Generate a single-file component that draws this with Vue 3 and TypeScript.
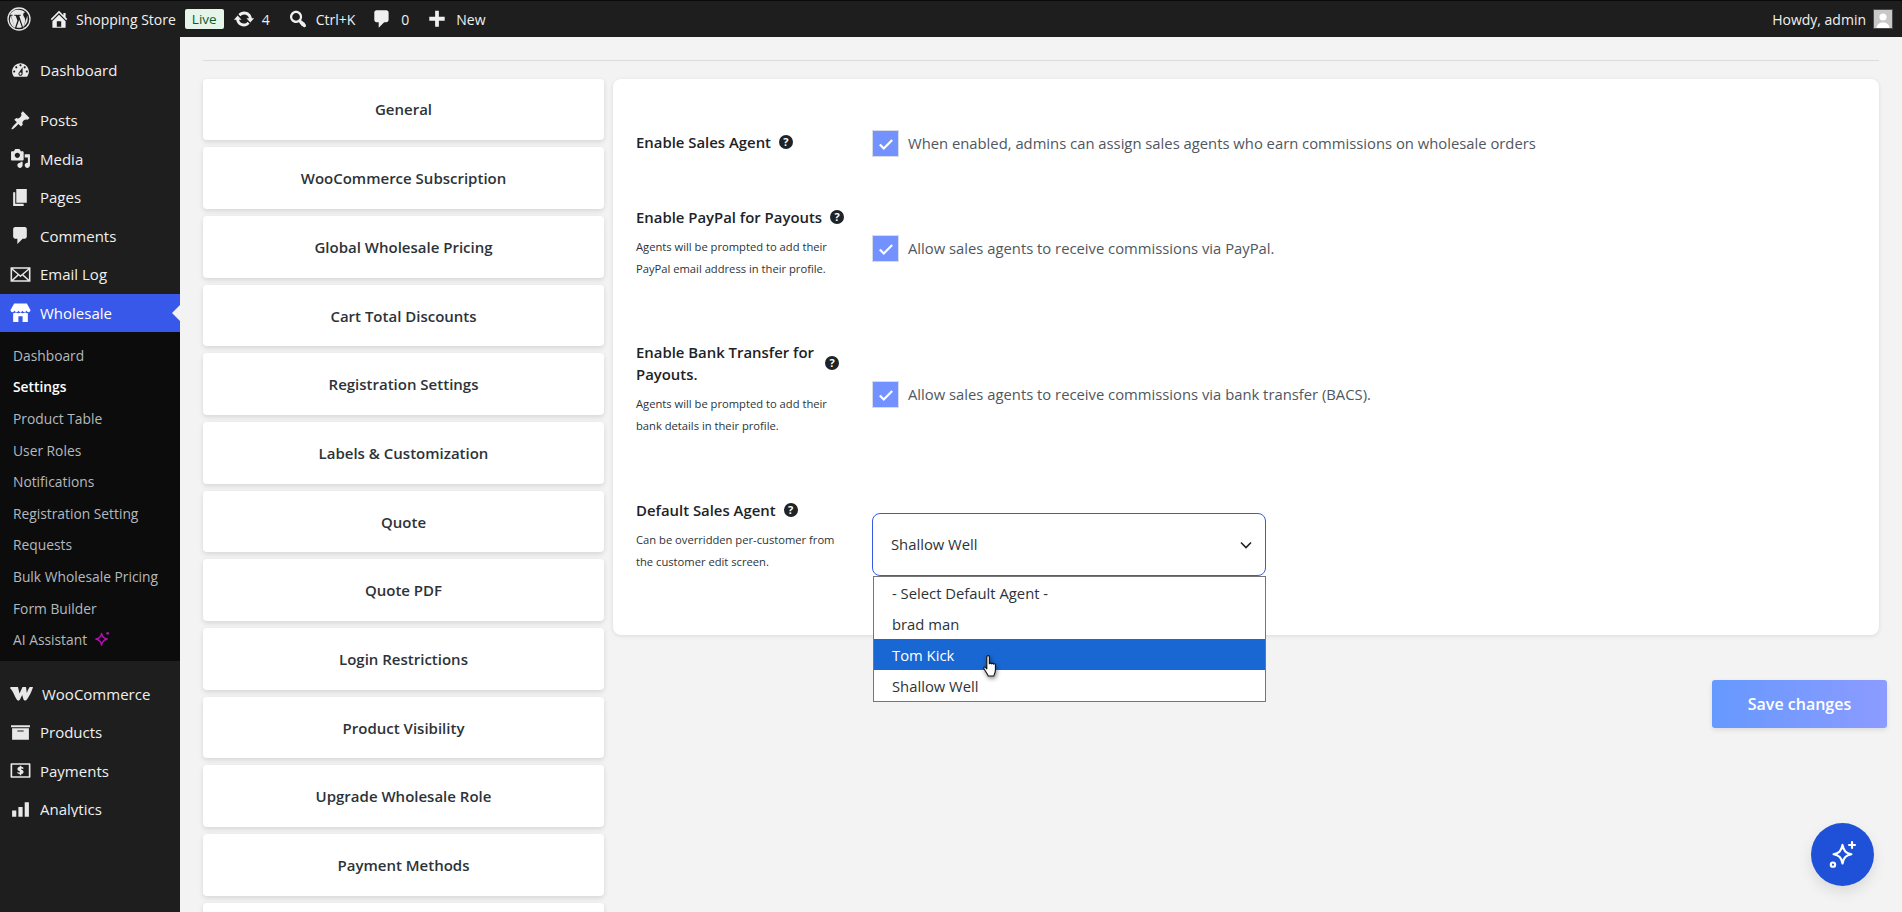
<script setup lang="ts">
interface MenuItem {
  label: string
  icon: string
}

const icons: Record<string, string> = {
  dashboard: 'M3.76 16h12.48c1.1-1.37 1.76-3.11 1.76-5 0-4.42-3.58-8-8-8s-8 3.58-8 8c0 1.89.66 3.63 1.76 5zM10 4c.55 0 1 .45 1 1s-.45 1-1 1-1-.45-1-1 .45-1 1-1zM6 6c.55 0 1 .45 1 1s-.45 1-1 1-1-.45-1-1 .45-1 1-1zm8 0c.55 0 1 .45 1 1s-.45 1-1 1-1-.45-1-1 .45-1 1-1zm-5.37 5.55L12 7v6c0 1.1-.9 2-2 2s-2-.9-2-2c0-.57.24-1.08.63-1.45zM4 10c.55 0 1 .45 1 1s-.45 1-1 1-1-.45-1-1 .45-1 1-1zm12 0c.55 0 1 .45 1 1s-.45 1-1 1-1-.45-1-1 .45-1 1-1zm-5 3c0-.55-.45-1-1-1s-1 .45-1 1 .45 1 1 1 1-.45 1-1z',
  post: 'M10.44 3.02l1.82-1.82 6.36 6.35-1.83 1.82c-1.05-.68-2.48-.57-3.41.36l-.75.75c-.92.93-1.04 2.35-.35 3.41l-1.83 1.82-2.41-2.41-2.8 2.79c-.42.42-3.38 2.71-3.8 2.29s1.86-3.39 2.28-3.81l2.79-2.79L4.1 9.36l1.83-1.82c1.05.69 2.48.57 3.4-.36l.75-.75c.93-.92 1.05-2.35.36-3.41z',
  media: 'M13 11V4c0-.55-.45-1-1-1h-1.67L9 1H5L3.67 3H2c-.55 0-1 .45-1 1v7c0 .55.45 1 1 1h10c.55 0 1-.45 1-1zM7 4.5c1.38 0 2.5 1.12 2.5 2.5S8.38 9.5 7 9.5 4.5 8.38 4.5 7 5.62 4.5 7 4.5zM14 6h5v10.5c0 1.38-1.12 2.5-2.5 2.5S14 17.88 14 16.5s1.12-2.5 2.5-2.5c.17 0 .34.02.5.05V9h-3V6zm-4 8.05V13h2v3.5c0 1.38-1.12 2.5-2.5 2.5S7 17.88 7 16.5 8.12 14 9.5 14c.17 0 .34.02.5.05z',
  page: 'M6 15V2h10v13H6zm-1 1h8v2H3V5h2v11z',
  comment: 'M5 2h9c1.1 0 2 .9 2 2v7c0 1.1-.9 2-2 2h-2l-5 5v-5H5c-1.1 0-2-.9-2-2V4c0-1.1.9-2 2-2z',
  email: 'M0.500 3h19v14h-19zM2.700 4.500 10 10.800l7.300-6.300H2.700zM2 5.600v9.200l5.200-4.700L2 5.600zm16 0-5.200 4.500 5.200 4.700V5.600zM8.300 11l-5 4.500h13.400l-5-4.500L10 12.700 8.300 11z',
  store: 'M4 1.500h12l3.500 6.200c0 1.300-.9 2-1.900 2s-1.800-.7-1.900-1.500c-.1.800-1 1.500-2 1.500s-1.800-.7-1.900-1.500c-.1.800-.8 1.500-1.800 1.500s-1.700-.7-1.800-1.500c-.1.800-.9 1.500-1.900 1.500s-1.900-.7-2-1.500c-.1.800-.9 1.500-1.900 1.500S.500 9 .500 7.700L4 1.500zM3 10.800c1 0 1.800-.2 2.500-.7.700.5 1.500.7 2.300.7s1.600-.2 2.200-.7c.600.5 1.400.7 2.200.7s1.600-.2 2.300-.7c.7.5 1.500.7 2.500.7V19h-5v-5.500H8V19H3v-8.200z',
  woo: 'M0 1C0 0 1 0 2 0h6l1.500 6.500L12.500 0H16l.8 6C18 3 19 0 20 0h3c-1 4-4 10-6.500 13-1 .8-2.500.8-3-.4L12.200 8 10 12.500c-.7 1.500-2.500 1.500-3.300.1C4.500 9 3 4 0 1z',
  archive: 'M19 3v2H1V3h18zM2 6h16v11H2V6zm11 3V8H7v1h6z',
  money: 'M1.500 3h17c.6 0 1 .4 1 1v12c0 .6-.4 1-1 1h-17c-.6 0-1-.4-1-1V4c0-.6.4-1 1-1zm.6 1.600v10.800h15.800V4.600H2.100zM9.300 5.500h1.400v1c.8.100 1.500.3 2 .6v1.600c-.6-.4-1.300-.7-2-.7v1.300c1.500.4 2.200 1 2.200 2.100s-.8 1.800-2.200 2v1.100H9.300v-1.100c-.9-.1-1.700-.3-2.200-.7v-1.600c.7.500 1.400.8 2.200.9v-1.400C7.800 10.200 7.100 9.600 7.100 8.500c0-1.100.8-1.800 2.200-2v-1z',
  analytics: 'M2 11h4v6H2v-6zm6-3.500h4V17H8V7.500zm6-4.500h4v14h-4V3z',
  update: 'M10.2 3.28c3.53 0 6.43 2.61 6.92 6h2.08l-3.5 4-3.5-4h2.32c-.45-1.97-2.21-3.45-4.32-3.45-1.45 0-2.73.71-3.54 1.78L4.95 5.66C6.23 4.2 8.11 3.28 10.2 3.28zm-.4 13.44c-3.52 0-6.43-2.61-6.92-6H.8l3.5-4c1.17 1.33 2.33 2.67 3.5 4H5.48c.45 1.97 2.21 3.45 4.32 3.45 1.45 0 2.73-.71 3.54-1.78l1.71 1.95c-1.28 1.46-3.15 2.38-5.25 2.38z',
  search: 'M12.14 4.18c1.87 1.87 2.11 4.75.72 6.89.12.1.22.21.36.31.2.16.47.36.81.59.34.24.56.39.66.47.42.31.73.57.94.78.32.32.6.65.84 1 .25.35.44.69.59 1.04.14.35.21.68.18 1-.02.32-.14.59-.36.81s-.49.34-.81.36c-.31.02-.65-.04-.99-.19-.35-.14-.7-.34-1.04-.59-.35-.24-.68-.52-1-.84-.21-.21-.47-.52-.77-.93-.1-.13-.25-.35-.47-.66-.22-.32-.4-.57-.56-.78-.16-.2-.29-.35-.44-.5-2.07 1.09-4.69.76-6.44-.98-2.14-2.15-2.14-5.64 0-7.78 2.15-2.15 5.63-2.15 7.78 0zm-1.41 6.36c1.36-1.37 1.36-3.58 0-4.95-1.37-1.37-3.59-1.37-4.95 0-1.37 1.37-1.37 3.58 0 4.95 1.36 1.37 3.58 1.37 4.95 0z',
  home: 'M16 8.5l1.53 1.53-1.06 1.06L10 4.62l-6.47 6.47-1.06-1.06L10 2.5l4 4v-2h2v4zm-6-2.46l6 5.99V18H4v-5.97zM12 17v-5H8v5h4z',
  plus: 'M17 8v3.500h-5.300V17H8.300v-5.500H3V8h5.300V2.500h3.400V8H17z'
}

const topMenu: MenuItem[] = [
  { label: 'Posts', icon: 'post' },
  { label: 'Media', icon: 'media' },
  { label: 'Pages', icon: 'page' },
  { label: 'Comments', icon: 'comment' },
  { label: 'Email Log', icon: 'email' }
]

const subMenu = [
  'Dashboard',
  'Settings',
  'Product Table',
  'User Roles',
  'Notifications',
  'Registration Setting',
  'Requests',
  'Bulk Wholesale Pricing',
  'Form Builder'
]

const lowerMenu: MenuItem[] = [
  { label: 'WooCommerce', icon: 'woo' },
  { label: 'Products', icon: 'archive' },
  { label: 'Payments', icon: 'money' },
  { label: 'Analytics', icon: 'analytics' }
]

const tabs = [
  'General',
  'WooCommerce Subscription',
  'Global Wholesale Pricing',
  'Cart Total Discounts',
  'Registration Settings',
  'Labels & Customization',
  'Quote',
  'Quote PDF',
  'Login Restrictions',
  'Product Visibility',
  'Upgrade Wholesale Role',
  'Payment Methods',
  'Sales Agents'
]

const agents = ['- Select Default Agent -', 'brad man', 'Tom Kick', 'Shallow Well']
</script>

<template>
  <div class="wp-page">
    <header class="adminbar">
      <svg class="wp-logo" viewBox="0 0 24 24">
        <circle cx="12" cy="12" r="11" fill="none" stroke="#e8e8e8" stroke-width="1.3" />
        <path fill="#e8e8e8" d="M12 2.800a9.200 9.200 0 0 1 6.300 2.500c-1.400 0-2.100 1.200-2.100 2.200 0 1 .6 1.800 1.100 2.700.5.800.9 1.800.9 3.100 0 1-.4 2.100-.9 3.700l-1.100 3.700-4-11.900c.7 0 1.300-.1 1.300-.1.600-.1.500-.9-.1-.9 0 0-1.800.1-2.900.1s-2.900-.1-2.900-.1c-.6 0-.7.9-.1.900 0 0 .6.100 1.200.1l1.700 4.700-2.400 7.200-4-11.900c.7 0 1.300-.1 1.300-.1.600-.1.500-.9-.1-.9 0 0-1.200.1-2.300.1A9.200 9.200 0 0 1 12 2.800zM3.700 9l4.400 12.100A9.200 9.200 0 0 1 3.700 9zm8.500 3.700 2.700 7.500a9.200 9.200 0 0 1-5.500.2l2.800-7.700zm7.900-3.900a9.200 9.200 0 0 1-3.400 10.700l2.500-7.300c.6-1.400.8-2.500.9-3.400z" />
      </svg>
      <div class="bar-item site">
        <svg class="bar-icon" viewBox="0 0 20 20"><path :d="icons.home" /></svg>
        <span>Shopping Store</span>
      </div>
      <span class="live">Live</span>
      <div class="bar-item updates">
        <svg class="bar-icon" viewBox="0 0 20 20"><path :d="icons.update" /></svg>
        <span>4</span>
      </div>
      <div class="bar-item search">
        <svg class="bar-icon" viewBox="0 0 20 20"><path :d="icons.search" /></svg>
        <span>Ctrl+K</span>
      </div>
      <div class="bar-item comments">
        <svg class="bar-icon" viewBox="0 0 20 20"><path :d="icons.comment" /></svg>
        <span>0</span>
      </div>
      <div class="bar-item new">
        <svg class="bar-icon" viewBox="0 0 20 20"><path :d="icons.plus" /></svg>
        <span>New</span>
      </div>
      <div class="howdy">
        <span>Howdy, admin</span>
        <span class="avatar">
          <svg viewBox="0 0 18 18"><rect width="18" height="18" fill="#c8c8c8" /><circle cx="9" cy="7" r="3.600" fill="#fff" /><path fill="#fff" d="M2.500 18c.3-3.600 3-5.500 6.500-5.500s6.200 1.900 6.500 5.500z" /></svg>
        </span>
      </div>
    </header>

    <div class="wp-body">
      <aside class="sidebar">
        <a class="menu-item dash">
          <svg class="menu-icon" viewBox="0 0 20 20"><path :d="icons.dashboard" /></svg>
          <span>Dashboard</span>
        </a>
        <div class="menu-group">
          <a v-for="item in topMenu" :key="item.label" class="menu-item">
            <svg class="menu-icon" viewBox="0 0 20 20"><path :d="icons[item.icon]" /></svg>
            <span>{{ item.label }}</span>
          </a>
        </div>
        <a class="menu-item current">
          <svg class="menu-icon" viewBox="0 0 20 20"><path :d="icons.store" /></svg>
          <span>Wholesale</span>
        </a>
        <div class="submenu">
          <a v-for="sub in subMenu" :key="sub" class="sub-item" :class="{ active: sub === 'Settings' }">{{ sub }}</a>
          <a class="sub-item">
            AI Assistant
            <svg class="ai-star" viewBox="0 0 18 18">
              <path fill="none" stroke="#b40fb4" stroke-width="1.500" stroke-linejoin="round" d="M8 2.500c.6 3.500 2 5.200 6 6-4 .8-5.400 2.500-6 6.500-.6-4-2-5.700-6-6.500 4-.8 5.400-2.500 6-6z" />
              <circle cx="14.500" cy="2.500" r="1.500" fill="#b40fb4" />
            </svg>
          </a>
        </div>
        <div class="menu-group lower">
          <a v-for="item in lowerMenu" :key="item.label" class="menu-item">
            <svg v-if="item.icon === 'woo'" class="menu-icon woo" viewBox="0 0 23 14"><path :d="icons.woo" /></svg>
            <svg v-else class="menu-icon" viewBox="0 0 20 20"><path :d="icons[item.icon]" /></svg>
            <span :class="{ clipped: item.label === 'Analytics' }">{{ item.label }}</span>
          </a>
        </div>
        <a class="menu-item marketing">
          <svg class="menu-icon" viewBox="0 0 20 20"><path :d="icons.archive" /></svg>
          <span>Marketing</span>
        </a>
      </aside>

      <main class="content">
        <hr class="divider" />
        <div class="columns">
          <nav class="tabs">
            <button v-for="tab in tabs" :key="tab" class="tab">{{ tab }}</button>
          </nav>

          <div class="right">
            <section class="card">
              <div class="row row-sales">
                <div class="label-col">
                  <div class="label-line">
                    <h4>Enable Sales Agent</h4>
                    <span class="help">?</span>
                  </div>
                </div>
                <label class="check">
                  <span class="box"><svg viewBox="0 0 16 16"><path d="M2.500 8.500l3.500 3.500 7.500-7.500" /></svg></span>
                  <span class="check-text">When enabled, admins can assign sales agents who earn commissions on wholesale orders</span>
                </label>
              </div>

              <div class="row row-paypal">
                <div class="label-col">
                  <div class="label-line">
                    <h4>Enable PayPal for Payouts</h4>
                    <span class="help">?</span>
                  </div>
                  <p>Agents will be prompted to add their<br />PayPal email address in their profile.</p>
                </div>
                <label class="check">
                  <span class="box"><svg viewBox="0 0 16 16"><path d="M2.500 8.500l3.500 3.500 7.500-7.500" /></svg></span>
                  <span class="check-text">Allow sales agents to receive commissions via PayPal.</span>
                </label>
              </div>

              <div class="row row-bank">
                <div class="label-col">
                  <div class="label-line">
                    <h4>Enable Bank Transfer for<br />Payouts.</h4>
                    <span class="help">?</span>
                  </div>
                  <p>Agents will be prompted to add their<br />bank details in their profile.</p>
                </div>
                <label class="check">
                  <span class="box"><svg viewBox="0 0 16 16"><path d="M2.500 8.500l3.500 3.500 7.500-7.500" /></svg></span>
                  <span class="check-text">Allow sales agents to receive commissions via bank transfer (BACS).</span>
                </label>
              </div>

              <div class="row row-default">
                <div class="label-col">
                  <div class="label-line">
                    <h4>Default Sales Agent</h4>
                    <span class="help">?</span>
                  </div>
                  <p>Can be overridden per-customer from<br />the customer edit screen.</p>
                </div>
                <div class="select-wrap">
                  <div class="select">
                    <span>Shallow Well</span>
                    <svg viewBox="0 0 12 8"><path d="M1 1.500l5 5 5-5" /></svg>
                  </div>
                  <ul class="options">
                    <li v-for="agent in agents" :key="agent" :class="{ hover: agent === 'Tom Kick' }">{{ agent }}</li>
                  </ul>
                  <svg class="cursor" viewBox="0 0 20 26">
                    <path fill="#fff" stroke="#111" stroke-width="1.200" stroke-linejoin="round" d="M6.500 2c.8-.8 2-.5 2.300.6V10c0-.6 2-.8 2.200.2 0-.7 2-.7 2.100.3.100-.7 2-.5 2.100.7v5.500c0 3-1.500 5-1.800 6.300H7.600c-.5-1.900-3.600-5.800-4.600-8-.5-1.200.8-2 1.800-1l1.300 1.500V2.800z" />
                  </svg>
                </div>
              </div>
            </section>

            <div class="save-row">
              <button class="save">Save changes</button>
            </div>
          </div>
        </div>
      </main>
    </div>

    <button class="fab">
      <svg viewBox="0 0 26 26" fill="none" stroke="#fff" stroke-width="1.800" stroke-linejoin="round" stroke-linecap="round">
        <path d="M13 5c1 5 2.800 6.800 7.500 7.800-4.700 1-6.500 2.800-7.500 7.700-1-4.900-2.800-6.700-7.500-7.700 4.700-1 6.500-2.800 7.500-7.800z" />
        <path d="M21 2.500v5M18.500 5h5" />
        <circle cx="5" cy="21.500" r="1.800" />
      </svg>
    </button>
  </div>
</template>

<style>
html,
body {
  margin: 0;
  background: #f3f3f3;
}
</style>

<style scoped>
.wp-page {
  position: relative;
  height: 912px;
  overflow: hidden;
  background: #f3f3f3;
  font-family: "Open Sans", "Noto Sans", sans-serif;
  color: #2c3338;
}

.adminbar {
  display: flex;
  align-items: center;
  height: 36px;
  border-top: 1px solid #0a0a0a;
  background: #1e1e1e;
  color: #f0f0f0;
  font-size: 14px;
}

.wp-logo {
  width: 24px;
  height: 24px;
  margin-left: 7px;
  margin-right: 17px;
}

.bar-item {
  display: flex;
  align-items: center;
}

.bar-icon {
  width: 22px;
  height: 22px;
  fill: #f0f0f0;
}

.site {
  gap: 6px;
}

.live {
  margin-left: 9px;
  padding: 0 7px;
  height: 20px;
  line-height: 20px;
  border-radius: 2px;
  background: #e5f5ea;
  color: #0b5c2a;
  font-size: 13.500px;
}

.updates {
  gap: 7px;
  margin-left: 9px;
}

.search {
  gap: 7px;
  margin-left: 17px;
}

.comments {
  gap: 8px;
  margin-left: 16px;
}

.new {
  gap: 8px;
  margin-left: 17px;
}

.howdy {
  display: flex;
  align-items: center;
  gap: 7px;
  margin-left: auto;
  margin-right: 9px;
}

.avatar {
  display: block;
  width: 18px;
  height: 18px;
  border: 1px solid #4a4a4a;
}

.avatar svg {
  display: block;
  width: 18px;
  height: 18px;
}

.wp-body {
  display: flex;
  height: 875px;
}

.sidebar {
  flex: 0 0 180px;
  background: #1e1e1e;
  overflow: hidden;
  padding-top: 14px;
}

.menu-item {
  display: flex;
  align-items: center;
  gap: 9px;
  height: 38px;
  padding-left: 10px;
  font-size: 15px;
  color: #f0f0f0;
}

.menu-item span {
  display: block;
}

.menu-icon {
  flex: none;
  width: 21px;
  height: 21px;
  fill: #e8e8e8;
}

.menu-icon.woo {
  width: 23px;
  height: 14px;
}

.dash {
  margin-bottom: 12px;
}

.menu-group .menu-item {
  height: 38.500px;
}

.menu-item.current {
  position: relative;
  height: 38px;
  background: #3858e9;
  color: #fff;
}

.menu-item.current .menu-icon {
  fill: #fff;
}

.menu-item.current::after {
  content: "";
  position: absolute;
  right: 0;
  top: 11px;
  border: 8px solid transparent;
  border-right-color: #f3f3f3;
  border-left: 0;
}

.submenu {
  display: flex;
  flex-direction: column;
  padding: 8px 0 6px;
  background: #0c0c0c;
}

.sub-item {
  display: flex;
  align-items: center;
  gap: 7px;
  height: 31.600px;
  padding-left: 13px;
  font-size: 13.800px;
  color: #b4b9be;
}

.sub-item.active {
  color: #fff;
  font-weight: 600;
}

.ai-star {
  width: 17px;
  height: 17px;
}

.lower {
  margin-top: 13px;
}

.clipped {
  height: 18px;
  margin-bottom: 3px;
  overflow: hidden;
  line-height: 21px;
}

.marketing {
  margin-top: 72px;
}

.content {
  flex: 1;
  min-width: 0;
  padding: 23px 23px 0;
}

.divider {
  height: 1px;
  margin: 0 0 18px;
  border: 0;
  background: #dcdcde;
}

.columns {
  display: flex;
  gap: 9px;
  align-items: flex-start;
}

.tabs {
  flex: 0 0 401px;
  display: flex;
  flex-direction: column;
  gap: 7px;
  margin-top: -0.400px;
}

.tab {
  height: 61.700px;
  border: 0;
  border-radius: 4px;
  background: #fff;
  box-shadow: 0 2px 5px rgba(0, 0, 0, 0.12);
  font: 600 15px "Open Sans", "Noto Sans", sans-serif;
  color: #2c3338;
}

.right {
  flex: 1;
  min-width: 0;
}

.card {
  height: 556px;
  box-sizing: border-box;
  padding: 52px 23px 0;
  border-radius: 8px;
  background: #fff;
  box-shadow: 0 1px 4px rgba(0, 0, 0, 0.1);
}

.row {
  display: grid;
  grid-template-columns: 236px 1fr;
  align-items: start;
}

.label-col h4 {
  margin: 0;
  font-size: 14.900px;
  font-weight: 600;
  line-height: 22px;
  color: #1d2327;
}

.label-col p {
  margin: 8px 0 0;
  font-size: 11.200px;
  line-height: 22px;
  color: #2c3338;
}

.label-line {
  display: flex;
  align-items: center;
  gap: 8px;
}

.row-bank .label-line h4 {
  flex: 0 0 181px;
}

.help {
  flex: none;
  width: 14px;
  height: 14px;
  border-radius: 50%;
  background: #1d2327;
  color: #fff;
  font-size: 11px;
  font-weight: 700;
  line-height: 14px;
  text-align: center;
}

.check {
  display: flex;
  align-items: center;
  gap: 9px;
  font-size: 14.800px;
  color: #50575e;
}

.check-text {
  margin-bottom: 2px;
}

.box {
  flex: none;
  display: flex;
  align-items: center;
  justify-content: center;
  box-sizing: border-box;
  width: 27px;
  height: 27px;
  border: 1px solid #d8dce6;
  background: #7391ff;
}

.box svg {
  width: 18px;
  height: 18px;
  fill: none;
  stroke: #fff;
  stroke-width: 2;
}

.row-sales {
  height: 75px;
}

.row-sales .check {
  margin-top: -1px;
}

.row-paypal {
  height: 135px;
}

.row-paypal .check {
  margin-top: 29px;
}

.row-bank {
  height: 158px;
}

.row-bank .check {
  margin-top: 40px;
}

.select-wrap {
  position: relative;
  width: 394px;
  margin-top: 14px;
}

.select {
  display: flex;
  align-items: center;
  justify-content: space-between;
  box-sizing: border-box;
  height: 63px;
  padding: 0 13px 2px 18px;
  border: 1px solid #3858e9;
  border-radius: 8px;
  background: #fff;
  font-size: 14.800px;
  color: #2c3338;
}

.select svg {
  width: 12px;
  height: 8px;
  margin-top: 3px;
  fill: none;
  stroke: #1d2327;
  stroke-width: 1.600;
}

.options {
  position: absolute;
  left: 1px;
  right: 0;
  top: 63px;
  margin: 0;
  padding: 0;
  list-style: none;
  background: #fff;
  border: 1px solid #767676;
  font-size: 14.800px;
}

.options li {
  height: 31px;
  line-height: 33px;
  padding-left: 18px;
  color: #2c3338;
}

.options li.hover {
  background: #1967d2;
  color: #fff;
}

.cursor {
  position: absolute;
  left: 109px;
  top: 141px;
  width: 19px;
  height: 25px;
  filter: drop-shadow(1px 2px 2px rgba(0, 0, 0, 0.45));
}

.save-row {
  display: flex;
  justify-content: flex-end;
  margin-top: 45px;
  margin-right: -8px;
}

.save {
  width: 175px;
  height: 48px;
  border: 0;
  border-radius: 3px;
  background: linear-gradient(90deg, #6699ff, #8c9bff);
  box-shadow: 0 2px 5px rgba(0, 0, 0, 0.1);
  color: #fff;
  font: 600 16px "Open Sans", "Noto Sans", sans-serif;
}

.fab {
  position: absolute;
  left: 1811px;
  top: 823px;
  display: flex;
  align-items: center;
  justify-content: center;
  width: 63px;
  height: 63px;
  padding: 0;
  border: 0;
  border-radius: 50%;
  background: #1f50d8;
  box-shadow: 0 6px 14px rgba(0, 0, 0, 0.1);
}

.fab svg {
  width: 31px;
  height: 31px;
}
</style>
